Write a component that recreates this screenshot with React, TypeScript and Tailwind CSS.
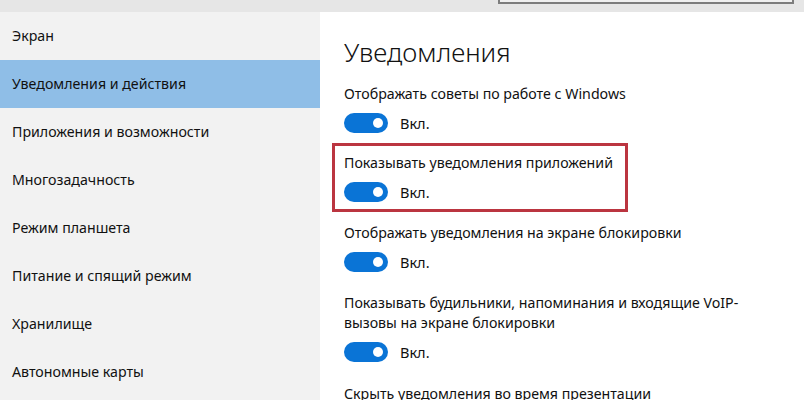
import React from "react";

const font = { fontFamily: '"Noto Sans", "Open Sans", sans-serif' };

const leftItems = [
  "Экран",
  "Уведомления и действия",
  "Приложения и возможности",
  "Многозадачность",
  "Режим планшета",
  "Питание и спящий режим",
  "Хранилище",
  "Автономные карты",
];

function Toggle() {
  return (
    <div className="mt-[9px] flex items-center h-5">
      <div className="w-[44px] h-5 rounded-full bg-[#0a74d6] flex items-center justify-end pr-[5px]">
        <div className="w-[10px] h-[10px] rounded-full bg-white" />
      </div>
      <span className="ml-3 text-[14.5px] leading-5 text-[#111]">Вкл.</span>
    </div>
  );
}

export default function App() {
  return (
    <div className="w-[804px] h-[400px] overflow-hidden bg-white" style={font}>
      <div className="h-[12px] bg-[#e6e6e6] flex justify-end">
        <div className="w-[296px] h-[4px] mr-[10px] border-x-2 border-b-2 border-[#7d7d7d] bg-[#f0f0f0]" />
      </div>
      <div className="flex h-[388px]">
        <div className="w-[320px] bg-[#f2f2f2] flex flex-col">
          {leftItems.map((t, i) => (
            <div
              key={t}
              className={`h-12 px-3 flex items-center text-[14.2px] text-[#111] ${i === 1 ? "bg-[#8fbee7]" : ""}`}
            >
              {t}
            </div>
          ))}
        </div>
        <div className="flex-1 pl-6 text-[14.2px] text-[#111] leading-5">
          <div className="mt-[22px] h-9 flex items-center text-[26px] font-light text-[#111]">Уведомления</div>
          <div className="mt-[14px]">
            <div>Отображать советы по работе с Windows</div>
            <Toggle />
          </div>
          <div className="mt-[20px] relative">
            <div className="absolute left-[-12px] top-[-10px] w-[296px] h-[69px] border-[3px] border-[#bb3540]" />
            <div>Показывать уведомления приложений</div>
            <Toggle />
          </div>
          <div className="mt-[21px]">
            <div>Отображать уведомления на экране блокировки</div>
            <Toggle />
          </div>
          <div className="mt-[21px]">
            <div>Показывать будильники, напоминания и входящие VoIP-</div>
            <div>вызовы на экране блокировки</div>
            <Toggle />
          </div>
          <div className="mt-[22px]">
            <div>Скрыть уведомления во время презентации</div>
          </div>
        </div>
      </div>
    </div>
  );
}
